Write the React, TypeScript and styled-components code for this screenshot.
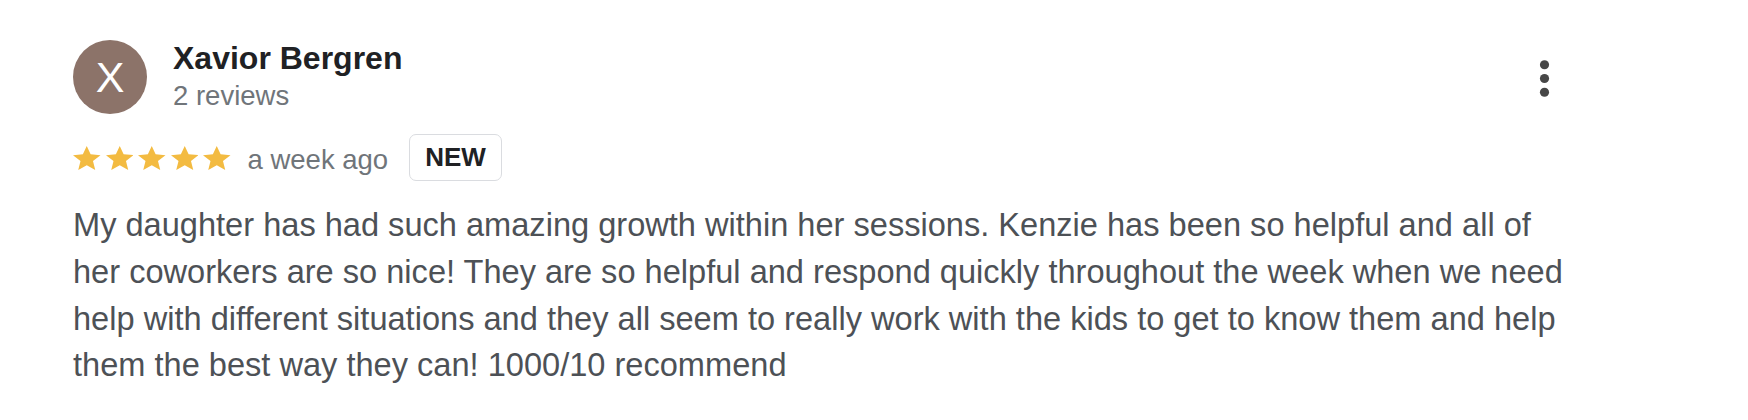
import { FC } from "react";
import styled, { createGlobalStyle } from "styled-components";

const GlobalStyle = createGlobalStyle`
	html, body {
		margin: 0;
		padding: 0;
		background: #fff;
	}

	body {
		font-family: "Liberation Sans", Arial, Helvetica, sans-serif;
	}
`;

const review = {
	author: "Xavior Bergren",
	initial: "X",
	reviews: "2 reviews",
	rating: 5,
	time: "a week ago",
	text: "My daughter has had such amazing growth within her sessions. Kenzie has been so helpful and all of her coworkers are so nice! They are so helpful and respond quickly throughout the week when we need help with different situations and they all seem to really work with the kids to get to know them and help them the best way they can! 1000/10 recommend",
};

const Star: FC = () => (
	<StarIcon viewBox="2 2 20 19" preserveAspectRatio="none">
		<path d="M12 17.27L18.18 21l-1.64-7.03L22 9.24l-7.19-.61L12 2 9.19 8.63 2 9.24l5.46 4.73L5.82 21z" />
	</StarIcon>
);

const App: FC = () => {
	return (
		<>
			<GlobalStyle />
			<Card>
				<Header>
					<Author>
						<Avatar>{review.initial}</Avatar>
						<Info>
							<Name>{review.author}</Name>
							<Sub>{review.reviews}</Sub>
						</Info>
					</Author>
					<MenuButton aria-label="More options">
						<svg viewBox="0 0 24 24" width="55" height="55" fill="currentColor">
							<circle cx="12" cy="6" r="2" />
							<circle cx="12" cy="12" r="2" />
							<circle cx="12" cy="18" r="2" />
						</svg>
					</MenuButton>
				</Header>
				<Meta>
					<Stars>
						{Array.from({ length: review.rating }).map((_, idx) => (
							<Star key={idx} />
						))}
					</Stars>
					<Time>{review.time}</Time>
					<Badge>NEW</Badge>
				</Meta>
				<Body>{review.text}</Body>
			</Card>
		</>
	);
};

export default App;

const Card = styled.div`
	padding: 40px 176px 0 73px;
`;

const Header = styled.div`
	display: flex;
	align-items: center;
	justify-content: space-between;
`;

const Author = styled.div`
	display: flex;
	align-items: flex-start;
	gap: 26px;
`;

const Avatar = styled.div`
	width: 74px;
	height: 74px;
	border-radius: 50%;
	background-color: #8c7369;
	color: #fff;
	font-size: 43px;
	display: flex;
	align-items: center;
	justify-content: center;
	line-height: 1;
`;

const Info = styled.div`
	display: flex;
	flex-direction: column;
`;

const Name = styled.div`
	font-size: 32px;
	line-height: 37px;
	font-weight: 700;
	color: #202124;
`;

const Sub = styled.div`
	margin-top: 4px;
	font-size: 27.5px;
	line-height: 30px;
	color: #70757a;
`;

const MenuButton = styled.button`
	border: none;
	background: none;
	padding: 0;
	margin-top: 3px;
	width: 55px;
	height: 55px;
	color: #474747;
	display: flex;
	cursor: pointer;
`;

const Meta = styled.div`
	display: flex;
	align-items: center;
	margin-top: 20px;
	height: 47px;
`;

const Stars = styled.div`
	display: flex;
	gap: 5px;
	margin-right: 17px;
`;

const StarIcon = styled.svg`
	width: 27.5px;
	height: 24px;
	fill: #f3bb41;
`;

const Time = styled.span`
	margin-top: 4px;
	font-size: 27.5px;
	line-height: 30px;
	color: #70757a;
	margin-right: 21px;
`;

const Badge = styled.span`
	box-sizing: border-box;
	height: 47px;
	padding: 0 15px;
	display: flex;
	align-items: center;
	border: 1.5px solid #dadce0;
	border-radius: 7px;
	font-size: 26px;
	font-weight: 700;
	color: #202124;
`;

const Body = styled.p`
	margin: 21px 0 0;
	font-size: 32.6px;
	line-height: 46.8px;
	color: #4d5156;
`;
